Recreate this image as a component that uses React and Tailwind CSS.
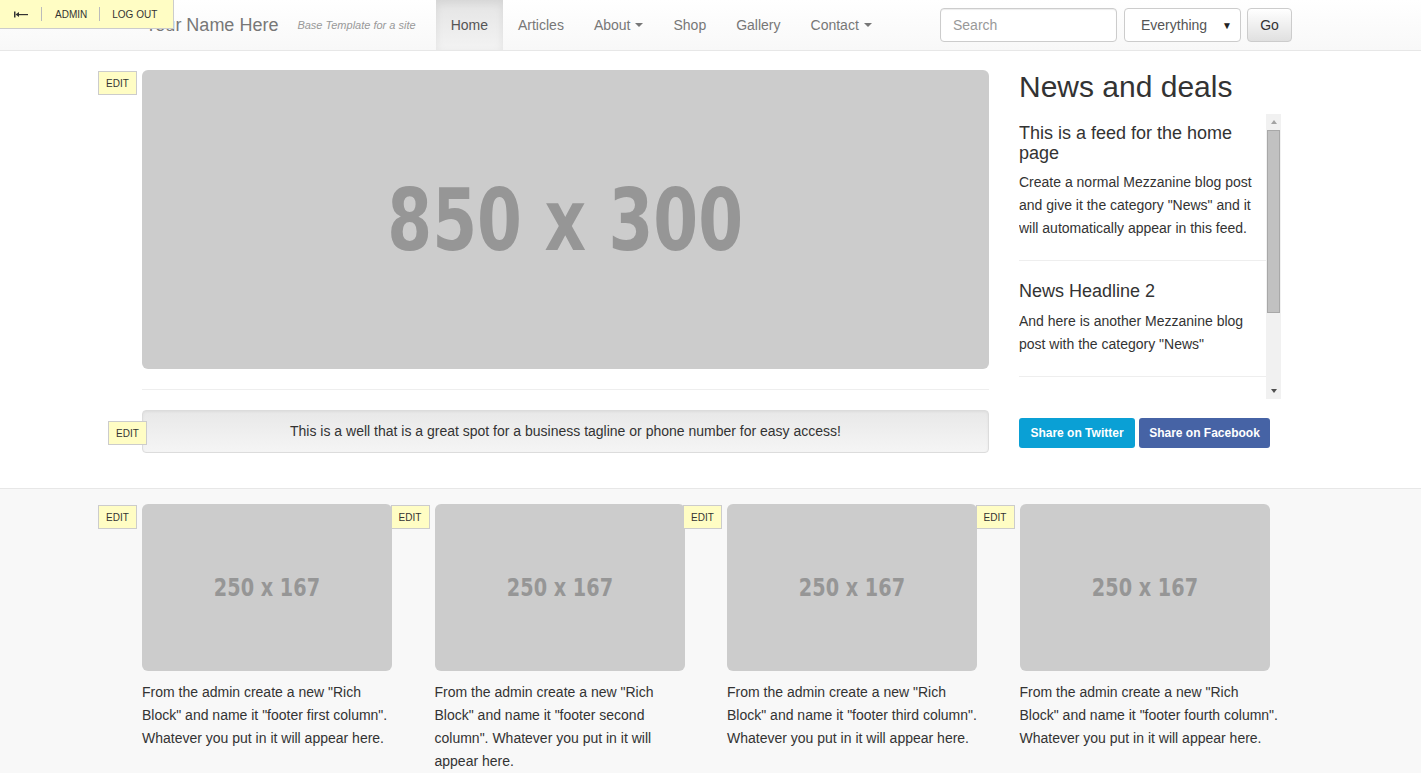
const sans = "font-['Liberation_Sans',Arial,sans-serif]";
const narrow = "font-['DejaVu_Sans',sans-serif]";

function EditButton({ className = "" }) {
  return (
    <div
      className={`absolute z-10 w-[39px] h-[24px] flex items-center justify-center bg-[#fffdc4] border border-[#cccccc] text-[10px] text-[#333] ${className}`}
    >
      EDIT
    </div>
  );
}

function Caret() {
  return <span className="inline-block ml-[5px] align-middle border-x-[4px] border-x-transparent border-t-[4px] border-t-[#777]" />;
}

function Placeholder({ label, className, textClass }) {
  return (
    <div className={`bg-[#cccccc] rounded-[6px] flex items-center justify-center ${className}`}>
      <span className={`${narrow} inline-block font-bold text-[#969696] whitespace-nowrap ${textClass}`}>{label}</span>
    </div>
  );
}

const footerCols = [
  'From the admin create a new "Rich Block" and name it "footer first column". Whatever you put in it will appear here.',
  'From the admin create a new "Rich Block" and name it "footer second column". Whatever you put in it will appear here.',
  'From the admin create a new "Rich Block" and name it "footer third column". Whatever you put in it will appear here.',
  'From the admin create a new "Rich Block" and name it "footer fourth column". Whatever you put in it will appear here.',
];

export default function App() {
  return (
    <div className={`${sans} min-h-screen bg-white text-[14px] text-[#333] relative`}>
      {/* Admin toolbar */}
      <div className="absolute top-0 left-0 z-20 h-[29px] bg-[#fffdc4] border-r border-b border-[#cccccc] flex items-center text-[10px] text-[#333] whitespace-nowrap">
        <div className="w-[41px] flex justify-center">
          <svg width="14" height="7" viewBox="0 0 14 7">
            <rect x="0" y="0.5" width="1.5" height="6" fill="#333" />
            <path d="M1.5 3.5 L5 1 L5 6 Z" fill="#333" />
            <rect x="4" y="3" width="10" height="1.2" fill="#333" />
          </svg>
        </div>
        <div className="h-[14px] w-px bg-[#bbb]" />
        <div className="pl-[13px] pr-[12px]">ADMIN</div>
        <div className="h-[14px] w-px bg-[#bbb]" />
        <div className="pl-[12px] pr-[16px]">LOG OUT</div>
      </div>

      {/* Navbar */}
      <header className="h-[51px] bg-gradient-to-b from-white to-[#f8f8f8] border-b border-[#e7e7e7]">
        <div className="w-[1170px] ml-[127px] px-[15px] h-full flex items-center">
          <span className="ml-[3px] text-[18px] text-[#777]">Your Name Here</span>
          <span className="ml-[19px] text-[11px] italic text-[#999]">Base Template for a site</span>
          <nav className="ml-[20px] flex h-full text-[#777]">
            <div className="px-[15px] h-full flex items-center text-[#555] bg-gradient-to-b from-[#e4e4e4] to-[#f3f3f3] shadow-[inset_0_3px_8px_rgba(0,0,0,0.075)]">Home</div>
            <div className="px-[15px] h-full flex items-center">Articles</div>
            <div className="px-[15px] h-full flex items-center">About<Caret /></div>
            <div className="px-[15px] h-full flex items-center">Shop</div>
            <div className="px-[15px] h-full flex items-center">Gallery</div>
            <div className="px-[15px] h-full flex items-center">Contact<Caret /></div>
          </nav>
          <div className="ml-auto mr-[-10px] flex items-center gap-[7px]">
            <div className="w-[177px] h-[34px] border border-[#ccc] rounded-[4px] bg-white px-[12px] flex items-center text-[#999] shadow-[inset_0_1px_1px_rgba(0,0,0,0.075)]">Search</div>
            <div className="w-[117px] h-[34px] border border-[#ccc] rounded-[4px] bg-white pl-[16px] pr-[8px] flex items-center justify-between text-[#555]">
              <span>Everything</span>
              <span className="text-[10px] text-[#222]">▼</span>
            </div>
            <div className="w-[45px] h-[34px] border border-[#ccc] rounded-[4px] bg-gradient-to-b from-white to-[#e0e0e0] flex items-center justify-center text-[#333] ml-[-1px]">Go</div>
          </div>
        </div>
      </header>

      {/* Main */}
      <main className="w-[1170px] ml-[127px] px-[15px] pt-[19px] pb-[35px] flex">
        <div className="w-[847px] relative">
          <EditButton className="left-[-44px] top-[1px]" />
          <Placeholder label="850 x 300" className="h-[299px]" textClass="text-[86px] leading-none scale-x-[0.75]" />
          <div className="mt-[20px] border-t border-[#eee]" />
          <div className="relative mt-[20px]">
            <EditButton className="left-[-34px] top-[11px]" />
            <div className="h-[43px] rounded-[4px] border border-[#dcdcdc] bg-gradient-to-b from-[#e8e8e8] to-[#f5f5f5] shadow-[inset_0_1px_3px_rgba(0,0,0,0.05)] flex items-center justify-center text-[14px] text-[#333]">
              This is a well that is a great spot for a business tagline or phone number for easy access!
            </div>
          </div>
        </div>

        <aside className="ml-[30px] w-[263px]">
          <h2 className="text-[30px] leading-[33px] text-[#333]">News and deals</h2>
          <div className="mt-[11px] h-[285px] flex overflow-hidden">
            <div className="w-[247px] overflow-hidden">
              <h3 className="mt-[9px] text-[18px] leading-[20px] text-[#333]">This is a feed for the home page</h3>
              <p className="mt-[8px] leading-[23px] text-[#333]">Create a normal Mezzanine blog post and give it the category "News" and it will automatically appear in this feed.</p>
              <div className="mt-[20px] border-t border-[#eee]" />
              <h3 className="mt-[20px] text-[18px] leading-[20px] text-[#333]">News Headline 2</h3>
              <p className="mt-[9px] leading-[23px] text-[#333]">And here is another Mezzanine blog post with the category "News"</p>
              <div className="mt-[20px] border-t border-[#eee]" />
            </div>
            <div className="w-[15px] bg-[#f1f1f1] flex flex-col items-center">
              <div className="h-[16px] flex items-center justify-center">
                <span className="border-x-[3.5px] border-x-transparent border-b-[4px] border-b-[#a3a3a3]" />
              </div>
              <div className="w-[13px] h-[183px] bg-[#c1c1c1] border border-[#a8a8a8]" />
              <div className="flex-1" />
              <div className="h-[16px] flex items-center justify-center">
                <span className="border-x-[3.5px] border-x-transparent border-t-[4px] border-t-[#505050]" />
              </div>
            </div>
          </div>
          <div className="mt-[19px] flex gap-[4px] text-[12px] font-bold text-white">
            <div className="w-[116px] h-[30px] rounded-[3px] bg-[#0aa0d5] flex items-center justify-center">Share on Twitter</div>
            <div className="w-[131px] h-[30px] rounded-[3px] bg-[#4663a5] flex items-center justify-center">Share on Facebook</div>
          </div>
        </aside>
      </main>

      {/* Footer */}
      <footer className="bg-[#f8f8f8] border-t border-[#e7e7e7] pt-[15px] pb-[20px]">
        <div className="w-[1170px] ml-[127px] grid grid-cols-4">
          {footerCols.map((text, i) => (
            <div key={i} className="px-[15px] relative">
              <EditButton className="left-[-29px] top-[1px]" />
              <Placeholder label="250 x 167" className="w-[250px] h-[167px]" textClass="text-[25px] leading-none scale-x-[0.77]" />
              <p className="mt-[10px] w-[260px] leading-[23px] text-[#333]">{text}</p>
            </div>
          ))}
        </div>
      </footer>
    </div>
  );
}
